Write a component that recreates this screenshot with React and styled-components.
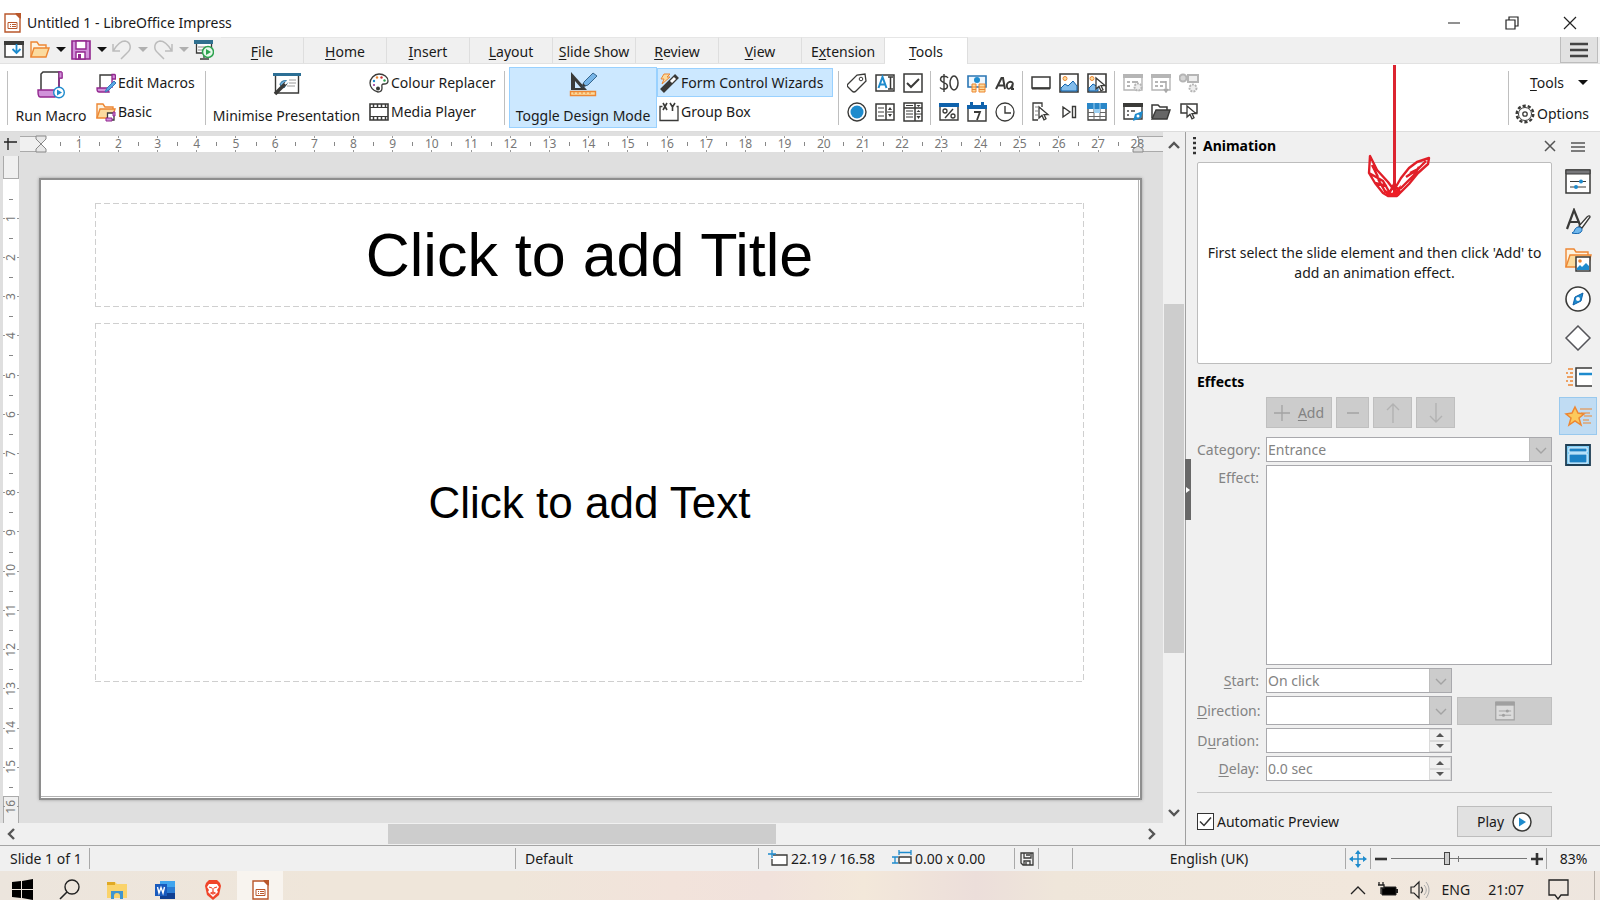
import React from 'react';
import styled, { createGlobalStyle, css } from 'styled-components';

const DARK = '#3a3a38';
const BLUE = '#1e8bcd';
const PURPLE = '#92278f';
const LILAC = '#d192da';
const ORANGE = '#ed8733';
const SAND = '#fbdb9f';

const GlobalStyle = createGlobalStyle`
  *, *::before, *::after { box-sizing: border-box; }
  body {
    margin: 0;
    background: #f0f0f0;
    color: #1a1a1a;
    font-family: "Noto Sans", "Open Sans", sans-serif;
    font-size: 14px;
    line-height: 20px;
  }
  button, input, select { font: inherit; color: inherit; }
  svg { display: block; flex: none; }
  u { text-underline-offset: 2px; text-decoration-thickness: 1px; }
`;

/* ---------- icons ---------- */

const Icon = ({ size = 20, width, height, box = '0 0 20 20', children }) => (
  <svg width={width || size} height={height || size} viewBox={box} fill="none" aria-hidden="true">
    {children}
  </svg>
);

const Cursor = ({ x = 0, y = 0 }) => (
  <path d={`M${x} ${y}v11l3-2.6 2 4.4 2-1-2-4.2h4z`} fill="#fff" stroke={DARK} strokeWidth="1.3" />
);

const ImpressIcon = ({ height = 20 }) => (
  <Icon width={17} height={height} box="0 0 17 20">
    <path d="M1 1h11l4 4v14H1z" fill="#fff" stroke="#b9572b" strokeWidth="1.4" />
    <path d="M11 0h6v6z" fill="#b9572b" />
    <path d="M4 9.500h9v6H4z" stroke="#b9572b" fill="#fff" />
    <path d="M6 11.500h1M6 13.500h1M8 11.500h4M8 13.500h4" stroke="#b9572b" />
  </Icon>
);

const NewIcon = () => (
  <Icon>
    <path d="M1 2h18v15H1z" fill="#fff" stroke={DARK} strokeWidth="1.5" />
    <path d="M0 1h20v4H0z" fill={DARK} />
    <path d="M12.500 4v9M8.500 9l4 4 4-4" stroke={BLUE} strokeWidth="1.800" />
  </Icon>
);
const OpenIcon = () => (
  <Icon>
    <path d="M1 17V2h6l2 3h7v3" stroke={ORANGE} strokeWidth="1.400" fill="#fdf3e0" />
    <path d="M4 8h15l-3 9H1z" fill={SAND} stroke={ORANGE} strokeWidth="1.400" />
  </Icon>
);
const SaveIcon = () => (
  <Icon>
    <path d="M1 1h18v18H1z" fill={LILAC} stroke={PURPLE} strokeWidth="1.600" />
    <path d="M5 1h10v8H5zM5 12h9v7H5z" fill="#fff" stroke={PURPLE} strokeWidth="1.400" />
    <path d="M7 14h3v5H7z" fill={PURPLE} />
  </Icon>
);
const UndoIcon = () => (
  <Icon><path d="M1 4v7h7M1.500 10.500C6 3 9 1 13 1c6 1 7 8 2 12l-6 6" stroke="#bcbcbc" strokeWidth="1.500" /></Icon>
);
const RedoIcon = () => (
  <Icon><path d="M19 4v7h-7M18.500 10.500C14 3 11 1 7 1 1 2 0 9 5 13l6 6" stroke="#bcbcbc" strokeWidth="1.500" /></Icon>
);
const SlideShowIcon = () => (
  <Icon>
    <path d="M2.500 3v10h15V3M10 13v5M6 19h9" stroke={DARK} strokeWidth="1.300" fill="#fff" />
    <path d="M0 0h19v4H0z" fill="#30708f" /><path d="M4 7h8M4 10h5" stroke="#888" />
    <circle cx="14" cy="12" r="5.500" fill="#e8f8ec" stroke="#2ea34f" strokeWidth="1.500" />
    <path d="M12 9l5 3-5 3z" fill="#2ea34f" />
  </Icon>
);
const Caret = ({ color = '#111' }) => (
  <Icon width={10} height={5} box="0 0 10 5"><path d="M0 0h10L5 5z" fill={color} /></Icon>
);

const Scroll = () => (
  <>
    <path d="M4 15V2h12" stroke={DARK} strokeWidth="1.400" fill="#fff" />
    <path d="M16 15V1.500h2.500c1 0 1 1 1 2V6h-3" fill={LILAC} stroke={PURPLE} strokeWidth="1.300" />
    <path d="M1 15h11l1 4H3c-2 0-2-2-2-4z" fill={LILAC} stroke={PURPLE} strokeWidth="1.300" />
  </>
);
const RunMacroIcon = () => (
  <Icon width={28} height={28} box="0 0 28 28">
    <path d="M4 19V3l2-2h16v17" stroke={DARK} strokeWidth="1.500" fill="#fff" />
    <path d="M21 1h3c1 0 1 1 1 2v4h-3v9" stroke={PURPLE} strokeWidth="1.400" fill="none" />
    <path d="M22 1h3v6h-3z" fill={LILAC} stroke={PURPLE} />
    <path d="M1 19h17v7H3c-2 0-2-4-2-7z" fill={LILAC} stroke={PURPLE} strokeWidth="1.400" />
    <circle cx="22" cy="21.500" r="5.300" fill="#fff" stroke={BLUE} strokeWidth="1.400" />
    <path d="M20 18.500l5 3-5 3z" fill={BLUE} />
  </Icon>
);
const EditMacroIcon = () => (
  <Icon><Scroll /><path d="M9 19l2-4 7-7 2 2-7 7z" fill="#5aa9e6" stroke="#3879b8" /></Icon>
);
const BasicIcon = () => (
  <Icon>
    <path d="M1 16V2h6l2 3h8v3" stroke={ORANGE} strokeWidth="1.400" fill="#fdf3e0" />
    <path d="M4 7h15l-3 9H1z" fill={SAND} stroke={ORANGE} strokeWidth="1.400" />
    <path d="M11.500 17v-6H18v7h-5" fill="#fff" stroke={DARK} strokeWidth="1.300" />
    <path d="M17 10h2v4h-2zM10 16h6v3h-6z" fill={LILAC} stroke={PURPLE} />
  </Icon>
);
const MinimiseIcon = () => (
  <Icon width={28} height={28} box="0 0 28 28">
    <path d="M2.500 4v18h23V4z" fill="#fff" stroke={DARK} strokeWidth="1.400" />
    <path d="M0 2h28v3H0z" fill="#2c6f95" />
    <path d="M7 14c0-4 6-6 8-3l-4 6z" fill="#6fb3e0" stroke="#2c6f95" />
    <path d="M16 9h7M16 12h7M14 15h8" stroke="#9a9a9a" />
    <path d="M13 12L2 23" stroke={DARK} strokeWidth="3.600" /><path d="M12 13l3-3" stroke="#fff" strokeWidth="2" />
  </Icon>
);
const PaletteIcon = () => (
  <Icon>
    <path d="M10 1c5 0 9 3 9 7 0 3-2 3-4 3-3 0-2 2-2 4s-1 4-4 4C4 18 1 14 1 10s4-9 9-9z" fill="#fff" stroke={DARK} strokeWidth="1.300" />
    <circle cx="5" cy="8" r="1.200" fill={BLUE} /><circle cx="8" cy="4.500" r="1.200" fill={ORANGE} />
    <circle cx="12.500" cy="4.500" r="1.200" fill="#c33" /><circle cx="15.500" cy="7.500" r="1.200" fill="#2ea34f" />
    <circle cx="5" cy="12" r="1" fill={PURPLE} /><circle cx="9" cy="15.500" r="2" fill={DARK} />
  </Icon>
);
const FilmIcon = () => (
  <Icon>
    <path d="M1 2h18v16H1z" fill="#fff" stroke={DARK} strokeWidth="1.600" />
    <path d="M1 5.500h18M1 14.500h18" stroke={DARK} />
    <path d="M4.500 2v3M8.500 2v3M12.500 2v3M16.500 2v3M4.500 15v3M8.500 15v3M12.500 15v3M16.500 15v3" stroke={DARK} strokeWidth="1.500" />
  </Icon>
);
const DesignIcon = () => (
  <Icon width={28} height={28} box="0 0 28 28">
    <path d="M2 1l16 18H2z" fill={DARK} /><path d="M6 10l6 7H6z" fill="#cce8ff" />
    <path d="M13 16l2-5 9-9 4 3-9 9z" fill="#76b5e8" stroke="#35658c" />
    <path d="M13 16l1-4 3 3z" fill={DARK} />
    <path d="M1.500 20.500h25v4h-25z" fill={SAND} stroke={ORANGE} strokeWidth="1.400" />
    <path d="M5 21v2M9 21v2M13 21v2M17 21v2M21 21v2" stroke={ORANGE} />
  </Icon>
);
const WizardIcon = () => (
  <Icon>
    <path d="M3 18L18 3" stroke={DARK} strokeWidth="5.500" /><path d="M12 9l4-4" stroke="#fff" strokeWidth="3" />
    <path d="M5 1h6L8 4h3L3 11l2-5H2z" fill={SAND} stroke={ORANGE} />
  </Icon>
);
const GroupBoxIcon = () => (
  <Icon>
    <path d="M3.500 4.500H1v14h18v-14h-1.500" stroke={DARK} strokeWidth="1.300" />
    <path d="M4 1l4 7M8 1L4 8M11 1l2.500 4L16 1M13.500 5v4" stroke={DARK} strokeWidth="1.600" />
  </Icon>
);

const formIcons = [
  [
    ['Label', <Icon key="i"><path d="M1 11l9-9 8-1 1 7-10 10c-2 2-3 1-4 0l-4-4c-1-1-1-2 0-3z" fill="#fff" stroke={DARK} strokeWidth="1.300" /><circle cx="14" cy="6" r="1.800" stroke={DARK} /></Icon>],
    ['Text Box', <Icon key="i"><path d="M1 2h18v16H1z" stroke={DARK} strokeWidth="1.500" fill="#fff" /><path d="M3.500 15L7.500 4l4 11M5 11.500h5" stroke={BLUE} strokeWidth="2" /><path d="M13 4h5M15.500 4v12M13 16h5" stroke={DARK} strokeWidth="1.500" /></Icon>],
    ['Check Box', <Icon key="i"><path d="M1 1h18v18H1z" stroke={DARK} strokeWidth="1.500" fill="#fff" /><path d="M4 10l4 4 8-8" stroke={DARK} strokeWidth="2" /></Icon>],
    ['Option Button', <Icon key="i"><circle cx="10" cy="10" r="9" stroke={DARK} strokeWidth="1.400" fill="#fff" /><circle cx="10" cy="10" r="6.500" fill={BLUE} /></Icon>],
    ['List Box', <Icon key="i"><path d="M1 2h18v16H1zM11 2v16" stroke={DARK} strokeWidth="1.500" fill="#fff" /><path d="M3 6h6M3 10h6M3 14h6M12 10h7" stroke={DARK} /><path d="M13 8l2-3 2 3zM13 12l2 3 2-3z" fill={DARK} /></Icon>],
    ['Combo Box', <Icon key="i"><path d="M1 1h18v18H1zM12 1v18M1 6h18" stroke={DARK} strokeWidth="1.500" fill="#fff" /><path d="M3 3.500h7M3 9h7M3 12h7M3 15h7M12 12h7" stroke={DARK} /><path d="M13.500 3h4l-2 2zM13.500 10l2-2 2 2zM13.500 14l2 3 2-3z" fill={DARK} /></Icon>],
  ],
  [
    ['Currency Field', <Icon key="i"><path d="M9 5C8 3 2 2 1.500 6s7 3 7 7-6 4-7.500 1.500M5 1v18" stroke={DARK} strokeWidth="1.400" /><ellipse cx="15" cy="10" rx="4" ry="7" stroke={DARK} strokeWidth="1.500" /></Icon>],
    ['Formatted Field', <Icon key="i"><path d="M1 3h18v11H1z" stroke="#2a76b4" strokeWidth="1.600" fill="#eef7ff" /><circle cx="10" cy="7" r="3" fill={BLUE} /><path d="M5 11h4v8H5zM12 11h6v8h-6z" fill={SAND} stroke={ORANGE} /><path d="M5 14h4M5 16.500h4M12 14h6M12 16.500h6" stroke={ORANGE} /></Icon>],
    ['Pattern Field', <Icon key="i"><path d="M1 16L6.500 5h1.500l2 11M3 12.500h6" stroke={DARK} strokeWidth="2" /><path d="M18 10c-3-3-7 0-6 4s5 1 6-4l-1 6h2" stroke={DARK} strokeWidth="1.800" /></Icon>],
    ['Numeric Field', <Icon key="i"><path d="M1 2h18v16H1z" stroke={DARK} strokeWidth="1.400" fill="#fff" /><path d="M0 1h20v4H0z" fill="#0f62ac" /><path d="M6 16l8-9" stroke={DARK} strokeWidth="1.400" /><circle cx="6" cy="9" r="2" stroke={DARK} strokeWidth="1.300" /><circle cx="14" cy="14" r="2" stroke={DARK} strokeWidth="1.300" /></Icon>],
    ['Date Field', <Icon key="i"><path d="M1 4h18v15H1z" stroke={DARK} strokeWidth="1.400" fill="#fff" /><path d="M0 3h20v4H0zM3 0h3v4H3zM14 0h3v4h-3z" fill="#0f62ac" /><path d="M7 10h6l-3 8" stroke={DARK} strokeWidth="1.800" /></Icon>],
    ['Time Field', <Icon key="i"><circle cx="10" cy="10" r="9" stroke={DARK} strokeWidth="1.300" fill="#fff" /><path d="M10 4v7h6" stroke={DARK} strokeWidth="1.400" /></Icon>],
  ],
  [
    ['Push Button', <Icon key="i"><path d="M1 4h18v11H1z" stroke={DARK} strokeWidth="1.500" fill="#fff" /><path d="M1 15.500h18" stroke={DARK} strokeWidth="2" /></Icon>],
    ['Image Control', <Icon key="i"><path d="M1 1h18v18H1z" stroke={DARK} strokeWidth="1.600" fill="#fff" /><path d="M2 15l4-4 3 2 5-5 4 5v5H2z" fill="#83bdec" stroke="#0f62ac" /><circle cx="6" cy="5.500" r="2" fill={SAND} stroke={ORANGE} /></Icon>],
    ['Image Button', <Icon key="i"><path d="M1 1h18v18H1z" stroke={DARK} strokeWidth="1.600" fill="#fff" /><path d="M2 15l4-4 5 3v4H2z" fill="#83bdec" stroke="#0f62ac" /><circle cx="5" cy="5.500" r="2" fill={SAND} stroke={ORANGE} /><Cursor x={9} y={5} /></Icon>],
    ['Select', <Icon key="i"><path d="M7 18H2V1h9v4" stroke={DARK} strokeWidth="1.300" fill="#fff" /><path d="M4 5h3M4 9h3M4 13h3" stroke="#888" /><Cursor x={8} y={5} /></Icon>],
    ['Navigation Bar', <Icon key="i"><path d="M4 5l7 5-7 5zM13.500 4.500h3v11h-3z" stroke={DARK} strokeWidth="1.400" fill="#fff" /></Icon>],
    ['Table Control', <Icon key="i"><path d="M1 2h18v16H1z" fill="#fff" stroke={DARK} strokeWidth="1.300" /><path d="M0 1h20v6H0z" fill="#2a87c8" /><path d="M7 7v11M13 7v11M1 10.500h18M1 14.500h18" stroke="#666" /><path d="M7 7h6v4H7z" fill="#9dd0f2" /><path d="M7 1v6M13 1v6" stroke="#9dd0f2" /></Icon>],
  ],
  [
    ['Control Properties', <Icon key="i"><path d="M1 2h18v15H1z" stroke="#b5b5b5" strokeWidth="1.400" /><path d="M0 1h20v4H0z" fill="#b5b5b5" /><path d="M4 9h3M4 13h3M9 9h6" stroke="#b5b5b5" strokeWidth="2" /><circle cx="15" cy="14" r="3.500" fill="#eee" stroke="#b5b5b5" strokeWidth="2" strokeDasharray="2 1" /></Icon>],
    ['Form Properties', <Icon key="i"><path d="M1 2h18v15H1z" stroke="#b5b5b5" strokeWidth="1.400" /><path d="M0 1h20v4H0z" fill="#b5b5b5" /><path d="M4 9h3M4 13h3M9 9h6M9 13h3" stroke="#b5b5b5" strokeWidth="2" /><path d="M15 8v10M13 16l2 3 2-3" stroke="#a9a9a9" strokeWidth="1.500" /></Icon>],
    ['Automatic Focus', <Icon key="i"><circle cx="4" cy="5" r="3.500" stroke="#b5b5b5" strokeWidth="2" fill="#d5d5d5" /><path d="M9 2h10v7H9z" stroke="#b5b5b5" strokeWidth="2" fill="#eee" /><circle cx="14" cy="15" r="3.500" fill="#eee" stroke="#b5b5b5" strokeWidth="2" strokeDasharray="2 1" /></Icon>],
    ['Form Navigator', <Icon key="i"><path d="M1 2h18v15H1z" stroke={DARK} strokeWidth="1.400" fill="#fff" /><path d="M0 1h20v4H0z" fill={DARK} /><path d="M4 9h2M4 13h2M8 9h4" stroke="#777" strokeWidth="2" /><path d="M10 19l2-7 8-3-2 7z" fill={BLUE} /><circle cx="15" cy="14" r="1.500" fill="#fff" /></Icon>],
    ['Open in Design Mode', <Icon key="i"><path d="M1 16V3h6l2 2h7v3" fill="#fff" stroke={DARK} strokeWidth="1.500" /><path d="M5 8h14l-3 9H1z" fill="#666" stroke={DARK} strokeWidth="1.400" /></Icon>],
    ['More Controls', <Icon key="i"><path d="M2 2h16v9H2z" stroke={DARK} strokeWidth="1.500" fill="#fff" /><Cursor x={8} y={4} /></Icon>],
  ],
];

const GearIcon = () => (
  <Icon>
    <circle cx="10" cy="10" r="8.300" stroke={DARK} strokeWidth="2.400" strokeDasharray="3.200 2" />
    <circle cx="10" cy="10" r="6.500" fill="#fff" stroke={DARK} />
    <circle cx="10" cy="10" r="2.200" stroke={DARK} strokeWidth="1.300" />
  </Icon>
);

const PropertiesGlyph = ({ dark = DARK, accent = BLUE }) => (
  <>
    <path d="M1 1h24v23H1z" fill="#fff" fillOpacity={dark === DARK ? 1 : 0.3} stroke={dark} strokeWidth="1.500" />
    <path d="M1 1h24v4H1z" fill={dark === DARK ? '#77777a' : dark} stroke={dark} />
    <path d="M5 12.500h16M5 18h16" stroke={dark} strokeWidth="1.200" />
    <circle cx="16" cy="12.500" r="2" fill={accent} /><circle cx="11" cy="18" r="2" fill={accent} />
  </>
);

const sideIcons = [
  ['Properties', <PropertiesGlyph key="g" />],
  ['Styles', <g key="g"><path d="M2 21L9 2l6 15M5 14h9" stroke={DARK} strokeWidth="2.200" /><path d="M25 9l-8 11-3-2 8-9c1-1 3-2 3 0z" fill="#fff" stroke={DARK} strokeWidth="1.300" /><path d="M7 25c3-1 2-5 6-6 4 0 5 3 3 5s-5 2-9 1z" fill="#6fb7ec" stroke="#0f62ac" /></g>],
  ['Gallery', <g key="g"><path d="M1 20V2h8l2 3h12v4" stroke={ORANGE} strokeWidth="1.400" fill="#fdf3e0" /><path d="M5 8h21l-3 12H1z" fill={SAND} stroke={ORANGE} strokeWidth="1.400" /><path d="M11 10h14v14H11z" fill="#fff" stroke={DARK} strokeWidth="1.500" /><path d="M12 21l3-3 2 2 4-4 3 3v4H12z" fill={BLUE} /><circle cx="15" cy="14" r="1.800" fill={ORANGE} /></g>],
  ['Navigator', <g key="g"><circle cx="13" cy="13" r="12" fill="#fff" stroke={DARK} strokeWidth="1.600" /><path d="M8 19l2-8 8-4-2 8z" fill={BLUE} stroke="#0f62ac" /><circle cx="13" cy="13" r="2" fill="#fff" /></g>],
  ['Shapes', <path key="g" d="M13 1l12 12-12 12L1 13z" fill="#fff" stroke="#55555a" strokeWidth="1.500" />],
  ['Slide Transition', <g key="g"><path d="M27 4H11v18h16" fill="#fff" stroke={DARK} strokeWidth="1.500" /><path d="M14 10h14" stroke={BLUE} strokeWidth="2.500" /><path d="M3 5h5M1 9h2M5 9h3M2 13h6M1 17h2M5 17h3M3 21h5" stroke={ORANGE} strokeWidth="1.400" /></g>],
  ['Animation', <g key="g"><path d="M15 6h12M16 10h9M19 13h8M18 17h6M18 20h8" stroke={ORANGE} strokeWidth="1.200" /><path d="M10 4l3 6 6 1-5 4 2 7-6-4-6 4 2-7-5-4 6-1z" fill="#fcc95c" stroke={ORANGE} strokeWidth="1.500" /></g>],
  ['Master Slides', <g key="g"><path d="M1 3h24v20H1z" fill="#83cdf4" stroke="#1f3f55" strokeWidth="1.800" /><path d="M4 6h18v4H4zM4 12h18v9H4z" fill="#1b82c5" stroke="#e9f6ff" /></g>],
];

/* ---------- window frame ---------- */

const Window = styled.div`
  position: relative;
  display: flex;
  flex-direction: column;
  min-height: 100vh;
  overflow: hidden;
`;

const TitleBar = styled.header`
  display: flex;
  align-items: center;
  gap: 6px;
  height: 37px;
  padding: 8px 4px 0;
  background: #fff;
  h1 { flex: 1; margin: 0; font-size: 14px; font-weight: 400; }
`;

const PlainButton = styled.button`
  display: grid;
  place-items: center;
  padding: 0;
  border: 0;
  background: none;
  width: ${(p) => p.$w || 20}px;
`;

const TabBar = styled.nav`
  display: flex;
  height: 27px;
  background: #f0f0f0;
  border-bottom: 1px solid #e2e2e2;
`;

const QuickAccess = styled.div`
  display: flex;
  align-items: center;
  width: 221px;
  padding-left: 4px;
  padding-bottom: 1px;
  button:first-child { margin-right: 6px; }
`;

const Tab = styled.button`
  width: 83px;
  padding: 2px 0 0;
  border: 0;
  border-top: 1px solid #e6e6e6;
  border-right: 1px solid #dedede;
  background: #f0f0f0;
  white-space: nowrap;
  ${(p) => p.$active && css`
    background: #fff;
    margin-bottom: -1px;
  `}
`;

const TabList = styled.div`
  display: flex;
  flex: 1;
`;

const MenuButton = styled(PlainButton)`
  margin-right: 2px;
  background: #e1e1e1;
  border: 1px solid #bdbdbd;
  border-width: 0 1px 1px;
`;

/* ---------- ribbon ---------- */

const Ribbon = styled.section`
  display: flex;
  align-items: flex-start;
  height: 68px;
  padding: 3px 4px 0 7px;
  background: #fff;
  border-bottom: 1px solid #dcdcdc;
`;

const Separator = styled.span`
  flex: none;
  width: 1px;
  height: 54px;
  margin-top: 4px;
  background: #bfbfbf;
`;

const Stack = styled.div`
  display: flex;
  flex-direction: column;
  gap: ${(p) => p.$gap || 0}px;
  width: ${(p) => p.$w}px;
  padding-top: 1px;
`;

const SmallButton = styled.button`
  display: flex;
  align-items: center;
  gap: 2px;
  height: 29px;
  padding: 0 1px;
  border: 1px solid ${(p) => (p.$on ? '#99d1ff' : 'transparent')};
  background: ${(p) => (p.$on ? '#cce8ff' : 'none')};
  white-space: nowrap;
`;

const BigButton = styled.button`
  display: flex;
  flex-direction: column;
  align-items: center;
  justify-content: space-between;
  width: ${(p) => p.$w}px;
  height: 61px;
  padding: 3px 0 1px;
  border: 1px solid ${(p) => (p.$on ? '#99d1ff' : 'transparent')};
  background: ${(p) => (p.$on ? '#cce8ff' : 'none')};
  white-space: nowrap;
`;

const ControlGrid = styled.div`
  display: grid;
  grid-template-columns: repeat(3, 28px);
  grid-auto-rows: 29px;
  padding: 1px 3px 0 4px;
`;

const ControlButton = styled(PlainButton)`
  width: 28px;
`;

const Spacer = styled.span`
  flex: ${(p) => p.$grow || 1};
`;

const MenuStack = styled(Stack)`
  margin-left: 4px;
`;

const ToolsMenu = styled(SmallButton)`
  padding-left: 16px;
  gap: 14px;
`;

/* ---------- workspace ---------- */

const Main = styled.main`
  display: flex;
  flex: 1;
`;

const Workspace = styled.section`
  display: grid;
  flex: 1;
  grid-template: 24px 1fr 22px / 20px 1fr 22px;
  background: #dfdfdf;
`;

const Corner = styled.div`
  padding: 5px 0 0 4px;
`;

const rulerText = css`
  color: #777;
  font-size: 12px;
  line-height: 16px;
`;

const HRuler = styled.div`
  position: relative;
  display: flex;
  height: 16px;
  margin-top: 4px;
  padding: 0 6px 0 20px;
  ${rulerText}
  background:
    linear-gradient(#f0f0f0, #f0f0f0) left / 20px 14px no-repeat,
    linear-gradient(#f0f0f0, #f0f0f0) right / 24px 14px no-repeat,
    linear-gradient(#aaa, #aaa) left / 20px 16px no-repeat,
    linear-gradient(#aaa, #aaa) right / 25px 16px no-repeat,
    #fff;
`;

const HMark = styled.span`
  position: relative;
  flex: 1 1 0;
  text-align: center;
  background:
    linear-gradient(#999, #999) top / 1px 2px no-repeat,
    linear-gradient(#999, #999) bottom / 1px 2px no-repeat;
  &::before {
    content: "";
    position: absolute;
    left: 0;
    top: 6px;
    width: 1px;
    height: 4px;
    background: #888;
  }
`;

const Half = styled.span`
  flex: 0.5 1 0;
`;

const Marker = styled.span`
  position: absolute;
  top: -1px;
  ${(p) => (p.$end ? 'right: 19px;' : 'left: 15px;')}
`;

const VRuler = styled.div`
  width: 16px;
  margin-left: 3px;
  overflow: hidden;
  background:
    linear-gradient(#f0f0f0, #f0f0f0) top / 14px 22px no-repeat,
    linear-gradient(#f0f0f0, #f0f0f0) bottom / 14px 26px no-repeat,
    linear-gradient(#aaa, #aaa) top / 16px 23px no-repeat,
    linear-gradient(#aaa, #aaa) bottom / 16px 27px no-repeat,
    #fff;
`;

const VScale = styled.div`
  display: flex;
  flex-direction: column;
  height: calc(100% + 3px);
  padding-top: 23px;
  ${rulerText}
`;

const VMark = styled.span`
  position: relative;
  display: grid;
  place-items: center;
  flex: 1 1 0;
  background:
    linear-gradient(#999, #999) left / 2px 1px no-repeat,
    linear-gradient(#999, #999) right / 2px 1px no-repeat;
  b { font-weight: 400; writing-mode: vertical-rl; transform: rotate(180deg); }
  &::before {
    content: "";
    position: absolute;
    left: 6px;
    top: 0;
    width: 4px;
    height: 1px;
    background: #888;
  }
`;

const Canvas = styled.div`
  display: flex;
  padding: 22px 21px 23px 19px;
`;

const SlideShadow = styled.div`
  display: flex;
  flex: 1;
  padding: 0 1px 1px 0;
  background: #fff;
  border: solid #8e8e8e;
  border-width: 2px;
  box-shadow: 0 0 3px #999;
`;

const Slide = styled.article`
  display: flex;
  flex: 1;
  flex-direction: column;
  gap: 16px;
  padding: 23px 54px 114px;
  background: #fff;
  border: solid #b4b4b4;
  border-width: 0 1px 1px 0;
`;

const Placeholder = styled.div`
  display: grid;
  place-items: center;
  ${(p) => (p.$body ? 'flex: 1;' : 'height: 104px;')}
  color: #000;
  font-family: "Liberation Sans", Arial, sans-serif;
  font-size: ${(p) => (p.$body ? 44 : 61)}px;
  line-height: 72px;
  background:
    repeating-linear-gradient(90deg, #cfcfcf 0 6px, transparent 6px 9px) top / 100% 1px no-repeat,
    repeating-linear-gradient(90deg, #cfcfcf 0 6px, transparent 6px 9px) bottom / 100% 1px no-repeat,
    repeating-linear-gradient(#cfcfcf 0 6px, transparent 6px 9px) left / 1px 100% no-repeat,
    repeating-linear-gradient(#cfcfcf 0 6px, transparent 6px 9px) right / 1px 100% no-repeat;
`;

const VScroll = styled.div`
  grid-area: 1 / 3 / 3 / 4;
  display: flex;
  flex-direction: column;
  align-items: center;
  padding: 2px 0 0;
  background: #f0f0f0;
`;

const HScroll = styled.div`
  grid-area: 3 / 1 / 4 / 4;
  display: flex;
  align-items: center;
  padding-right: 22px;
  background: #f0f0f0;
`;

const Thumb = styled.span`
  flex: ${(p) => p.$grow};
  ${(p) => (p.$across ? 'height: 20px;' : 'width: 20px;')}
  background: #cdcdcd;
`;

const ScrollArrow = styled(PlainButton)`
  width: 22px;
  height: 21px;
`;

/* ---------- sidebar ---------- */

const Sidebar = styled.aside`
  position: relative;
  display: flex;
  width: 415px;
  border-left: 1px solid #a0a0a0;
  background: #f0f0f0;
`;

const Splitter = styled.button`
  position: absolute;
  left: -1px;
  top: 327px;
  display: grid;
  place-items: center;
  width: 6px;
  height: 61px;
  padding: 0;
  border: 0;
  background: #686868;
`;

const Deck = styled.div`
  display: flex;
  flex: 1;
  flex-direction: column;
  padding: 0 4px 8px 11px;
`;

const DeckHeader = styled.div`
  display: flex;
  align-items: center;
  height: 30px;
  padding-bottom: 2px;
  h2 { flex: 1; margin: 0 0 0 6px; font-size: 14px; color: #000; }
  > svg { margin-left: -4px; }
`;

const EffectsHeading = styled.h3`
  margin: 8px 0 5px;
  color: #000;
  font-size: 14px;
  line-height: 20px;
`;

const AnimationList = styled.div`
  display: grid;
  place-items: center;
  height: 202px;
  background: #fff;
  border: 1px solid #bdbdbd;
  border-radius: 2px;
  text-align: center;
  p { margin: 0; }
`;

const ButtonRow = styled.div`
  display: flex;
  gap: 4px;
  margin-left: 69px;
`;

const EffectButton = styled.button`
  display: flex;
  align-items: center;
  justify-content: center;
  gap: 8px;
  width: ${(p) => p.$w}px;
  height: 31px;
  padding: 0;
  border: 1px solid #bfbfbf;
  background: #cccccc;
  color: #838383;
`;

const Form = styled.form`
  display: grid;
  flex: 1;
  grid-template-columns: 62px 1fr 95px;
  grid-template-rows: 25px 1fr 25px 29px 25px 25px;
  row-gap: 3px;
  margin-top: 9px;
  color: #838383;
`;

const Label = styled.label`
  grid-column: 1;
  align-self: ${(p) => (p.$top ? 'start' : 'center')};
  margin-top: ${(p) => (p.$top ? 3 : 0)}px;
  text-align: right;
`;

const Field = styled.div`
  position: relative;
  display: flex;
  grid-column: ${(p) => (p.$wide ? '2 / 4' : '2')};
  margin: 0 ${(p) => (p.$wide ? 0 : 5)}px 0 7px;
  border: 1px solid #a9a9ad;
  background: #fff;
  select, input {
    flex: 1;
    min-width: 0;
    width: 100%;
    padding: 0 1px;
    border: 0;
    background: #fff;
    color: #838383;
    opacity: 1;
    appearance: none;
  }
  select[size] { overflow: hidden; }
`;

const DropArrow = styled.span`
  display: grid;
  flex: none;
  place-items: center;
  width: 22px;
  background: #cccccc;
  border-left: 1px solid #bdbdbd;
`;

const SpinButtons = styled.span`
  display: grid;
  flex: none;
  grid-template-rows: 1fr 1fr;
  width: 22px;
  button { display: grid; place-items: center; padding: 0; border: 1px solid #dadada; background: #f0f0f0; }
`;

const OptionsButton = styled(EffectButton)`
  width: auto;
  height: 28px;
  align-self: center;
`;

const Rule = styled.hr`
  width: 100%;
  height: 1px;
  margin: 11px 0 13px;
  border: 0;
  background: #c6c6c6;
`;

const DeckFooter = styled.div`
  display: flex;
  align-items: center;
  justify-content: space-between;
`;

const CheckLabel = styled.label`
  display: grid;
  grid-template-columns: 16px 1fr;
  align-items: center;
  column-gap: 4px;
  input {
    grid-area: 1 / 1;
    width: 17px;
    height: 17px;
    margin: 0;
    appearance: none;
    background: #fff;
    border: 1px solid #333;
  }
  svg { grid-area: 1 / 1; z-index: 1; pointer-events: none; }
`;

const PlayButton = styled.button`
  display: flex;
  align-items: center;
  justify-content: center;
  gap: 8px;
  width: 95px;
  height: 31px;
  padding: 0;
  background: #e1e1e1;
  border: 1px solid #bdbdbd;
`;

const SideTabs = styled.nav`
  display: flex;
  flex-direction: column;
  align-items: center;
  gap: 1px;
  width: 44px;
`;

const SideTab = styled.button`
  display: grid;
  place-items: center;
  width: 38px;
  height: 38px;
  padding: 0;
  border: 1px solid ${(p) => (p.$active ? '#99c9ee' : 'transparent')};
  background: ${(p) => (p.$active ? '#c0dcf3' : 'none')};
`;

const SideMenu = styled(SideTab)`
  height: 30px;
`;

/* ---------- status bar ---------- */

const StatusBar = styled.footer`
  display: flex;
  align-items: center;
  height: 26px;
  background: #f0f0f0;
  border-top: 1px solid #a5a5a5;
`;

const StatusCell = styled.div`
  display: flex;
  align-items: center;
  align-self: stretch;
  justify-content: ${(p) => (p.$center ? 'center' : 'flex-start')};
  ${(p) => (p.$w ? `width: ${p.$w}px;` : 'flex: 1;')}
  padding-left: ${(p) => p.$pad || 0}px;
  gap: ${(p) => p.$gap || 0}px;
  margin: 2px 0;
  border-right: ${(p) => (p.$open ? 0 : 1)}px solid #a9a9a9;
  white-space: nowrap;
`;

const Measure = styled.span`
  display: flex;
  align-items: center;
  gap: 3px;
`;

const ZoomSlider = styled.input`
  width: 136px;
  height: 14px;
  margin: 0;
  appearance: none;
  background:
    linear-gradient(#777, #777) center / 100% 1px no-repeat,
    linear-gradient(#777, #777) center / 1px 6px no-repeat;
  &::-webkit-slider-thumb {
    appearance: none;
    width: 6px;
    height: 13px;
    border: 1px solid #444;
    background: #ccc;
  }
`;

/* ---------- task bar ---------- */

const TaskBar = styled.footer`
  display: flex;
  height: 29px;
  overflow: hidden;
  background: linear-gradient(90deg, #ece5dd, #efe6da 20%, #efe6da 32%, #f2e3db 42%, #f1e2dc 48%, #f3e8da 54%, #ecdeda 61%, #efe6da 66%, #f1e7dc 85%, #eee6df);
`;

const TaskButton = styled.button`
  display: grid;
  place-items: center;
  width: ${(p) => p.$w || 48}px;
  height: 37px;
  padding: 0;
  border: 0;
  background: ${(p) => (p.$active ? '#f8f4ef' : 'none')};
`;

const Tray = styled.div`
  display: flex;
  height: 37px;
  align-items: center;
  gap: ${(p) => p.$gap || 0}px;
  margin-left: auto;
  padding-right: 5px;
`;

const Clock = styled.time`
  margin: 0 12px 0 6px;
`;

const ShowDesktop = styled.span`
  width: 1px;
  height: 38px;
  margin-left: 13px;
  background: #b9b1a9;
`;

const Annotation = styled.div`
  position: absolute;
  top: 65px;
  right: 168px;
  pointer-events: none;
`;

const tabs = [
  ['', 'F', 'ile'], ['', 'H', 'ome'], ['', 'I', 'nsert'], ['', 'L', 'ayout'], ['', 'S', 'lide Show'],
  ['', 'R', 'eview'], ['', 'V', 'iew'], ['E', 'x', 'tension'], ['', 'T', 'ools'],
];

const range = (n) => Array.from({ length: n }, (_, i) => i + 1);

const Chevron = ({ d, color = '#555', w = 2.4 }) => (
  <Icon width={12} height={12} box="0 0 12 12"><path d={d} stroke={color} strokeWidth={w} /></Icon>
);

const Select = ({ id, value }) => (
  <>
    <select id={id} disabled defaultValue={value}><option>{value}</option></select>
    <DropArrow><Chevron d="M1 4l5 5 5-5" color="#a3a3a3" w={1.4} /></DropArrow>
  </>
);

const Spin = ({ id, value }) => (
  <>
    <input id={id} type="text" disabled defaultValue={value} />
    <SpinButtons>
      <button type="button" disabled aria-label="Increase"><Icon width={8} height={4} box="0 0 8 4"><path d="M0 4h8L4 0z" fill="#555" /></Icon></button>
      <button type="button" disabled aria-label="Decrease"><Icon width={8} height={4} box="0 0 8 4"><path d="M0 0h8L4 4z" fill="#555" /></Icon></button>
    </SpinButtons>
  </>
);

function AnimationDeck() {
  return (
    <Deck>
      <DeckHeader>
        <Icon width={4} height={18} box="0 0 4 18"><path d="M0 1h3M0 6h3M0 11h3M0 16h3" stroke="#333" strokeWidth="2.400" /></Icon>
        <h2>Animation</h2>
        <PlainButton $w={8} aria-label="Close sidebar"><Chevron d="M1 1l10 10M11 1L1 11" w={1.5} /></PlainButton>
      </DeckHeader>
      <AnimationList>
        <p>First select the slide element and then click 'Add' to<br />add an animation effect.</p>
      </AnimationList>
      <EffectsHeading>Effects</EffectsHeading>
      <ButtonRow>
        <EffectButton $w={66} disabled>
          <Icon size={16} box="0 0 16 16"><path d="M8 0v16M0 8h16" stroke="#a3a3a3" strokeWidth="1.300" /></Icon>
          <span><u>A</u>dd</span>
        </EffectButton>
        <EffectButton $w={33} disabled aria-label="Remove">
          <Icon size={12} box="0 0 12 12"><path d="M0 6h12" stroke="#a0a0a0" strokeWidth="1.400" /></Icon>
        </EffectButton>
        <EffectButton $w={39} disabled aria-label="Move up">
          <Icon><path d="M10 20V1M4 7l6-6 6 6" stroke="#b2b2b2" strokeWidth="1.400" /></Icon>
        </EffectButton>
        <EffectButton $w={39} disabled aria-label="Move down">
          <Icon><path d="M10 0v19M4 13l6 6 6-6" stroke="#b2b2b2" strokeWidth="1.400" /></Icon>
        </EffectButton>
      </ButtonRow>
      <Form>
        <Label htmlFor="category">Category:</Label>
        <Field $wide><Select id="category" value="Entrance" /></Field>
        <Label htmlFor="effect" $top>Effect:</Label>
        <Field $wide><select id="effect" size={8} disabled /></Field>
        <Label htmlFor="start"><u>S</u>tart:</Label>
        <Field><Select id="start" value="On click" /></Field>
        <Label htmlFor="direction"><u>D</u>irection:</Label>
        <Field><Select id="direction" value="" /></Field>
        <OptionsButton type="button" disabled aria-label="Options">
          <Icon box="0 0 26 25"><PropertiesGlyph dark="#a0a0a0" accent="#a0a0a0" /></Icon>
        </OptionsButton>
        <Label htmlFor="duration">D<u>u</u>ration:</Label>
        <Field><Spin id="duration" value="" /></Field>
        <Label htmlFor="delay"><u>D</u>elay:</Label>
        <Field><Spin id="delay" value="0.0 sec" /></Field>
      </Form>
      <Rule />
      <DeckFooter>
        <CheckLabel>
          <input type="checkbox" defaultChecked />
          <Icon size={17} box="0 0 17 17"><path d="M3 8.500l4 4 7-8" stroke="#333" strokeWidth="1.500" /></Icon>
          <span>Automatic Preview</span>
        </CheckLabel>
        <PlayButton>
          Play
          <Icon><circle cx="10" cy="10" r="9" fill="#fff" stroke={DARK} strokeWidth="1.500" /><path d="M7 5.500l7 4.500-7 4.500z" fill={BLUE} /></Icon>
        </PlayButton>
      </DeckFooter>
    </Deck>
  );
}

export default function App() {
  return (
    <Window>
      <GlobalStyle />
      <TitleBar>
        <ImpressIcon />
        <h1>Untitled 1 - LibreOffice Impress</h1>
        <PlainButton $w={52} aria-label="Minimise"><Chevron d="M0 6h12" w={1.3} /></PlainButton>
        <PlainButton $w={52} aria-label="Restore">
          <Icon size={14} box="0 0 14 14"><path d="M1 4h9v9H1zM4 4V1h9v9h-3" stroke="#222" strokeWidth="1.200" /></Icon>
        </PlainButton>
        <PlainButton $w={52} aria-label="Close">
          <Icon size={14} box="0 0 14 14"><path d="M1 1l12 12M13 1L1 13" stroke="#222" strokeWidth="1.200" /></Icon>
        </PlainButton>
      </TitleBar>

      <TabBar>
        <QuickAccess>
          <PlainButton aria-label="New"><NewIcon /></PlainButton>
          <PlainButton aria-label="Open"><OpenIcon /></PlainButton>
          <PlainButton $w={21} aria-label="Recent files"><Caret /></PlainButton>
          <PlainButton aria-label="Save"><SaveIcon /></PlainButton>
          <PlainButton $w={21} aria-label="Save options"><Caret /></PlainButton>
          <PlainButton aria-label="Undo"><UndoIcon /></PlainButton>
          <PlainButton $w={21} aria-label="Undo list"><Caret color="#b0b0b0" /></PlainButton>
          <PlainButton aria-label="Redo"><RedoIcon /></PlainButton>
          <PlainButton $w={21} aria-label="Redo list"><Caret color="#b0b0b0" /></PlainButton>
          <PlainButton aria-label="Start slide show"><SlideShowIcon /></PlainButton>
        </QuickAccess>
        <TabList>
          {tabs.map(([a, key, b]) => (
            <Tab key={key + b} $active={b === 'ools'}>{a}<u>{key}</u>{b}</Tab>
          ))}
        </TabList>
        <MenuButton $w={38} aria-label="Menu">
          <Icon width={18} height={16} box="0 0 18 16"><path d="M0 2h18M0 8h18M0 14h18" stroke="#444" strokeWidth="2.400" /></Icon>
        </MenuButton>
      </TabBar>

      <Ribbon>
        <Separator />
        <BigButton $w={86}><RunMacroIcon />Run Macro</BigButton>
        <Stack $w={111}>
          <SmallButton><EditMacroIcon />Edit Macros</SmallButton>
          <SmallButton><BasicIcon />Basic</SmallButton>
        </Stack>
        <Separator />
        <BigButton $w={161}><MinimiseIcon />Minimise Presentation</BigButton>
        <Stack $w={137}>
          <SmallButton><PaletteIcon />Colour Replacer</SmallButton>
          <SmallButton><FilmIcon />Media Player</SmallButton>
        </Stack>
        <Separator />
        <Stack $w={4} />
        <BigButton $w={148} $on><DesignIcon />Toggle Design Mode</BigButton>
        <Stack $w={176}>
          <SmallButton $on><WizardIcon />Form Control Wizards</SmallButton>
          <SmallButton><GroupBoxIcon />Group Box</SmallButton>
        </Stack>
        <Stack $w={5} />
        {formIcons.map((group) => (
          <React.Fragment key={group[0][0]}>
            <Separator />
            <ControlGrid>
              {group.map(([name, icon]) => (
                <ControlButton key={name} aria-label={name}>{icon}</ControlButton>
              ))}
            </ControlGrid>
          </React.Fragment>
        ))}
        <Spacer />
        <Separator />
        <MenuStack $w={83} $gap={2}>
          <ToolsMenu><span><u>T</u>ools</span><Caret /></ToolsMenu>
          <SmallButton><GearIcon />Options</SmallButton>
        </MenuStack>
      </Ribbon>

      <Main>
        <Workspace>
          <Corner><Icon size={14} box="0 0 14 14"><path d="M0 5h13M4 1v12" stroke="#222" strokeWidth="1.400" /></Icon></Corner>
          <HRuler>
            <Half />
            {range(28).map((n) => <HMark key={n}>{n}</HMark>)}
            <Marker>
              <Icon width={12} height={18} box="0 0 12 18"><path d="M1 1h10v3L6 9l5 5v3H1v-3l5-5-5-5z" fill="#e8e8e8" stroke="#888" /></Icon>
            </Marker>
            <Marker $end>
              <Icon width={12} height={18} box="0 0 12 18"><path d="M6 11l5 3v3H1v-3z" fill="#ddd" stroke="#888" /></Icon>
            </Marker>
          </HRuler>
          <VScroll>
            <ScrollArrow aria-label="Scroll up"><Chevron d="M1 9l5-5 5 5" /></ScrollArrow>
            <Spacer $grow={149} />
            <Thumb $grow={349} />
            <Spacer $grow={149} />
            <ScrollArrow aria-label="Scroll down"><Chevron d="M1 3l5 5 5-5" /></ScrollArrow>
          </VScroll>
          <VRuler>
            <VScale>
              <Half />
              {range(16).map((n) => <VMark key={n}><b>{n}</b></VMark>)}
            </VScale>
          </VRuler>
          <Canvas>
            <SlideShadow>
              <Slide>
                <Placeholder>Click to add Title</Placeholder>
                <Placeholder $body>Click to add Text</Placeholder>
              </Slide>
            </SlideShadow>
          </Canvas>
          <HScroll>
            <ScrollArrow aria-label="Scroll left"><Chevron d="M9 1L4 6l5 5" /></ScrollArrow>
            <Spacer $grow={366} />
            <Thumb $across $grow={388} />
            <Spacer $grow={365} />
            <ScrollArrow aria-label="Scroll right"><Chevron d="M3 1l5 5-5 5" /></ScrollArrow>
          </HScroll>
        </Workspace>

        <Sidebar>
          <Splitter aria-label="Hide sidebar">
            <Icon width={4} height={6} box="0 0 4 6"><path d="M0 0v6l4-3z" fill="#fff" /></Icon>
          </Splitter>
          <AnimationDeck />
          <SideTabs>
            <SideMenu aria-label="Sidebar settings">
              <Icon width={14} height={10} box="0 0 14 10"><path d="M0 1h14M0 5h14M0 9h14" stroke="#555" strokeWidth="1.300" /></Icon>
            </SideMenu>
            {sideIcons.map(([name, glyph]) => (
              <SideTab key={name} aria-label={name} $active={name === 'Animation'}>
                <Icon width={28} height={26} box="-1 0 28 26">{glyph}</Icon>
              </SideTab>
            ))}
          </SideTabs>
        </Sidebar>
      </Main>

      <StatusBar>
        <StatusCell $w={90} $pad={10}>Slide 1 of 1</StatusCell>
        <StatusCell />
        <StatusCell $w={243} $pad={9}>Default</StatusCell>
        <StatusCell $w={256} $pad={9} $gap={17}>
          <Measure>
            <Icon><path d="M5 6h14v10H4v-6" fill="#fff" stroke={DARK} strokeWidth="1.300" /><path d="M4 1v8M0 5h8" stroke={BLUE} strokeWidth="1.300" /></Icon>
            22.19 / 16.58
          </Measure>
          <Measure>
            <Icon><path d="M7 8h12v6H7z" fill="#fff" stroke={DARK} strokeWidth="1.400" /><path d="M7 1v5M19 1v5M7 3.500h12M0 8h6M3 8v6M0 14h6" stroke={BLUE} strokeWidth="1.300" /></Icon>
            0.00 x 0.00
          </Measure>
        </StatusCell>
        <StatusCell $w={24} $center>
          <Icon size={14} box="0 0 14 14"><path d="M1 1h12v12H3l-2-2zM4 1v5h7V1M4 13V9h6v4M6 10v3M6 3h4" stroke={DARK} strokeWidth="1.300" /></Icon>
        </StatusCell>
        <StatusCell $w={34} />
        <StatusCell $w={273} $center>English (UK)</StatusCell>
        <StatusCell $w={25} $center>
          <Icon size={18} box="0 0 18 18"><path d="M9 2v14M2 9h14" stroke={BLUE} strokeWidth="1.500" /><path d="M9 0l3 4H6zM9 18l3-4H6zM0 9l4-3v6zM18 9l-4-3v6z" fill={BLUE} /></Icon>
        </StatusCell>
        <StatusCell $w={176} $gap={4} $center>
          <Icon size={12} box="0 0 12 12"><path d="M0 6h12" stroke="#333" strokeWidth="2.600" /></Icon>
          <ZoomSlider type="range" min="0" max="100" defaultValue="41" aria-label="Zoom" />
          <Icon size={12} box="0 0 12 12"><path d="M0 6h12M6 0v12" stroke="#333" strokeWidth="2.600" /></Icon>
        </StatusCell>
        <StatusCell $w={53} $center $open>83%</StatusCell>
      </StatusBar>

      <TaskBar>
        <TaskButton $w={45} aria-label="Start">
          <Icon size={21} box="0 0 21 21"><path d="M0 3l9-1v8H0zM10 2l11-2v10H10zM0 11h9v8l-9-1zM10 11h11v10l-11-2z" fill="#000" /></Icon>
        </TaskButton>
        <TaskButton aria-label="Search">
          <Icon size={21} box="0 0 21 21"><circle cx="13" cy="8" r="7" stroke="#222" strokeWidth="1.400" /><path d="M8 13l-7 7" stroke="#222" strokeWidth="1.600" /></Icon>
        </TaskButton>
        <TaskButton aria-label="File Explorer">
          <Icon><path d="M0 2h8l2 2h10v14H0z" fill="#fad36b" /><path d="M0 2h8v3H0z" fill="#e0a924" /><path d="M4 19v-8h12v8h-3v-3a3 3 0 00-6 0v3z" fill="#3f95cf" /></Icon>
        </TaskButton>
        <TaskButton aria-label="Word">
          <Icon><path d="M5 1h15v6H5z" fill="#41a5ee" /><path d="M5 7h15v6H5z" fill="#2b7cd3" /><path d="M5 13h15v6H5z" fill="#103f91" /><path d="M0 4h12v12H0z" fill="#185abd" /><path d="M2.500 7l1.500 6 2-5.500L8 13l1.500-6" stroke="#fff" strokeWidth="1.400" /></Icon>
        </TaskButton>
        <TaskButton aria-label="Brave">
          <Icon><path d="M6 0h8l3 3 1 3-2 9-6 5-6-5-2-9 1-3z" fill="#f0452a" /><path d="M6 4h8l2 3-2 3 1 2-5 5-5-5 1-2-2-3z" fill="#fff" /><path d="M6 7l3 1M14 7l-3 1M10 8v4l-2 1 2 1 2-1-2-1" stroke="#f0452a" strokeWidth="1.200" /></Icon>
        </TaskButton>
        <TaskButton $w={46} $active aria-label="LibreOffice Impress"><ImpressIcon /></TaskButton>
        <Tray $gap={12}>
          <Icon width={16} height={10} box="0 0 16 10"><path d="M1 9l7-7 7 7" stroke="#222" strokeWidth="1.300" /></Icon>
          <Icon width={20} height={16} box="0 0 20 16"><path d="M4 5h14v8H4z" fill="#000" stroke="#222" /><path d="M18 7h2v4h-2z" fill="#222" /><path d="M1 0v3M5 0v3M0 3h6v3H3v6" stroke="#222" strokeWidth="1.300" fill="#f0e8de" /></Icon>
          <Icon><path d="M1 7h3l5-5v16l-5-5H1z" stroke="#222" strokeWidth="1.200" /><path d="M11 7c2 2 2 4 0 6" stroke="#444" strokeWidth="1.200" /><path d="M14 5c3 3 3 7 0 10M16 2c4 5 4 11 0 16" stroke="#aaa" /></Icon>
          <span>ENG</span>
          <Clock>21:07</Clock>
          <Icon width={21} height={21} box="0 0 21 21"><path d="M1 1h19v15h-7l-3 4-3-4H1z" stroke="#222" strokeWidth="1.300" /></Icon>
          <ShowDesktop />
        </Tray>
      </TaskBar>

      <Annotation>
        <Icon width={66} height={134} box="0 0 66 134">
          <path d="M28.500 0v130" stroke="#dc2430" strokeWidth="3" />
          <path d="M4 91l-1 17 6 10 8 10 5 3h9l12-12 9-11 10-9 1-6-12 4-8 6-8 10-7 12-6-8-11-12zM3 108l14 8 8 14M6 100l6 12M9 118l12 3M40 112l12-8 8-8M34 124l14-14 5-8M20 128l-8-14M44 108l8-4M22 131l6-12 6 8" stroke="#e01f28" strokeWidth="2.400" strokeLinejoin="round" />
          <path d="M17 124l9 4 9-8-2 11H21z" fill="#ee1c24" />
        </Icon>
      </Annotation>
    </Window>
  );
}
